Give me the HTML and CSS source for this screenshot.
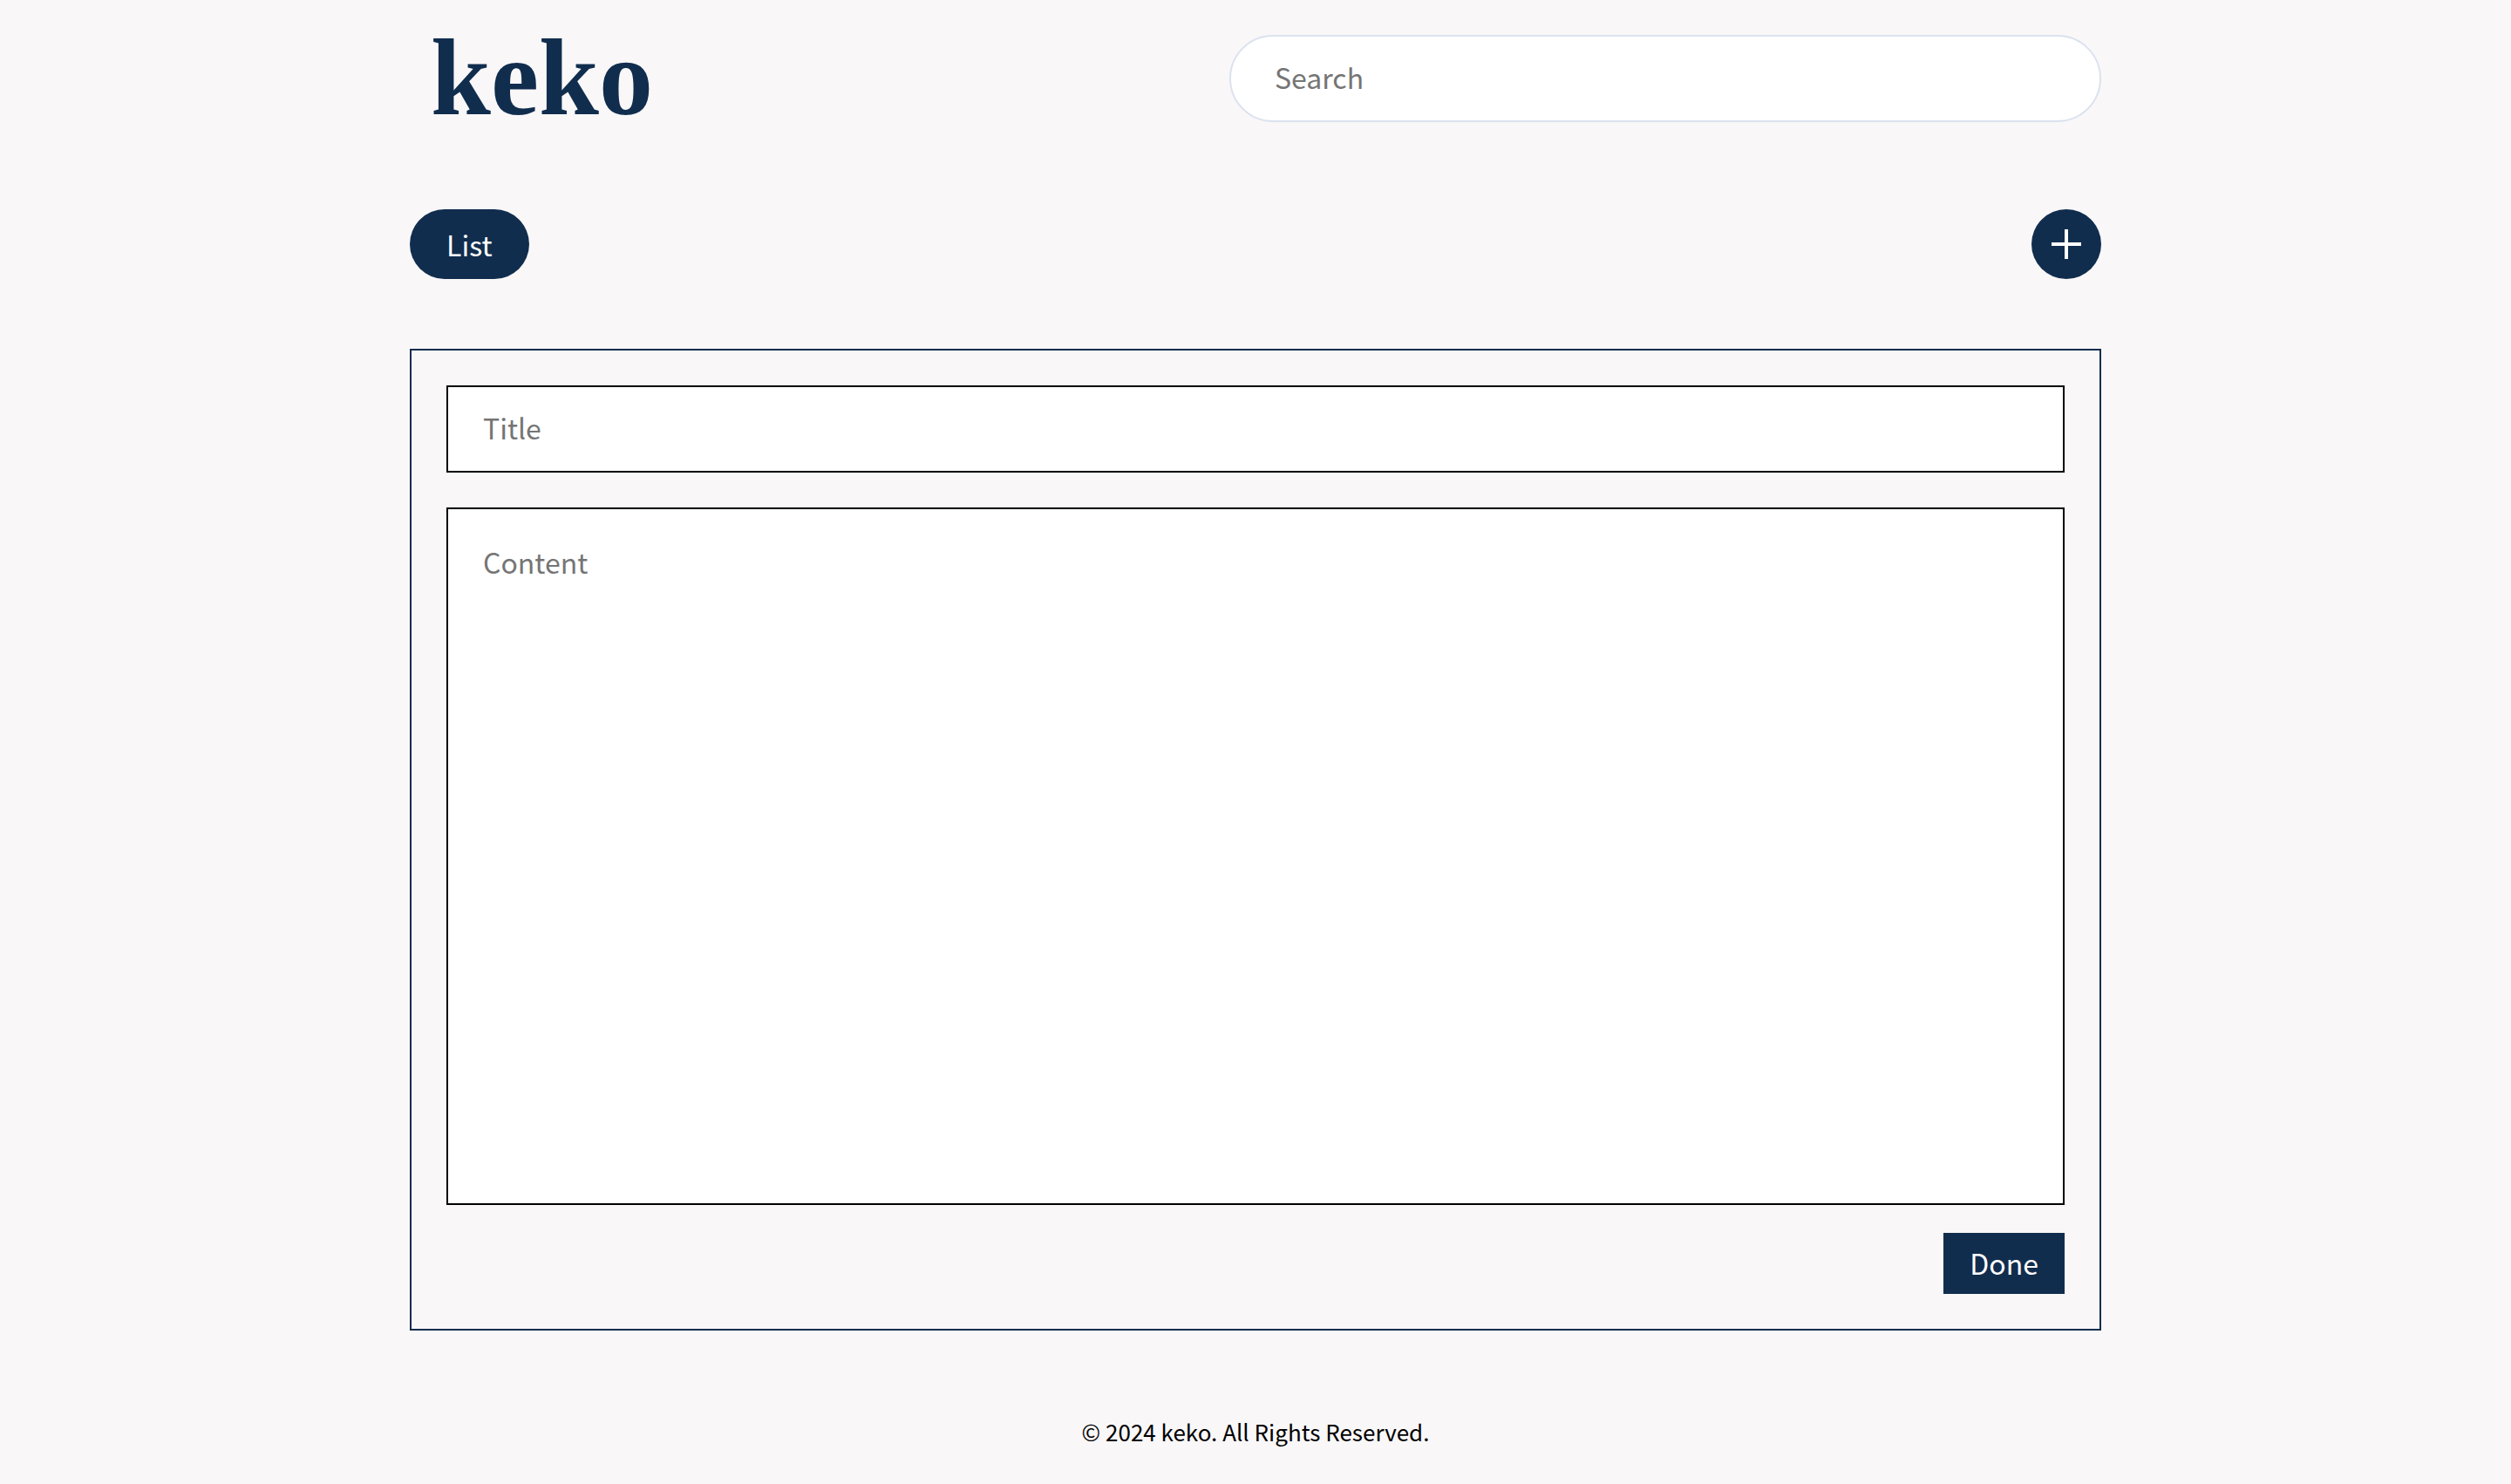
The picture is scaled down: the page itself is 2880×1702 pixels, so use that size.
FILE: index.html
```html
<!DOCTYPE html>
<html lang="en">
<head>
  <meta charset="utf-8">
  <meta name="viewport" content="width=device-width, initial-scale=1">
  <title>keko</title>
  <link rel="stylesheet" href="styles.css">
</head>
<body>
  <div class="page">
    <header class="header">
      <a class="logo" href="#">keko</a>
      <input class="field search" type="search" placeholder="Search" aria-label="Search">
    </header>
    <nav class="toolbar" aria-label="Notes">
      <a class="list-link" href="#">List</a>
      <button class="add-button" type="button" aria-label="Add">
        <svg class="add-icon" viewBox="0 0 34 34" aria-hidden="true">
          <path d="M17 0V34M0 17H34" stroke="currentColor" stroke-width="4"/>
        </svg>
      </button>
    </nav>
    <main>
      <form class="editor">
        <input class="field" type="text" placeholder="Title" aria-label="Title">
        <textarea class="field content" placeholder="Content" aria-label="Content"></textarea>
        <button class="done-button" type="button">Done</button>
      </form>
    </main>
    <footer class="footer">© 2024 keko. All Rights Reserved.</footer>
  </div>
</body>
</html>
```
FILE: styles.css
```css
*,
*::before,
*::after {
  box-sizing: border-box;
}

:root {
  --navy: #112d4e;
  --page: #f9f7f8;
  --outline: #dbe2ef;
}

body {
  margin: 0;
  background: var(--page);
  color: #000;
  font-family: "Noto Sans CJK KR", "Noto Sans", sans-serif;
  font-size: 32px;
  line-height: 48px;
}

input,
textarea,
button {
  margin: 0;
  font: inherit;
}

.page {
  max-width: 2020px;
  margin: 0 auto;
  padding: 40px;
}

.header,
.toolbar {
  display: flex;
  align-items: center;
  justify-content: space-between;
  gap: 40px;
}

.logo {
  padding-left: 24px;
  color: var(--navy);
  font-family: "Liberation Serif", serif;
  font-size: 124px;
  font-weight: 700;
  line-height: 100px;
  text-decoration: none;
}

.field {
  display: block;
  width: 100%;
  padding: 22px 40px 26px;
  border: 2px solid #000;
  border-radius: 0;
  background: #fff;
  appearance: none;
  outline: none;
}

.field::placeholder {
  color: #757575;
  opacity: 1;
}

.search {
  max-width: 1000px;
  padding-right: 50px;
  padding-left: 50px;
  border-color: var(--outline);
  border-radius: 50px;
}

.toolbar {
  margin: 100px 0 80px;
}

.list-link {
  padding: 16px 42px;
  border-radius: 40px;
  background: var(--navy);
  color: #fff;
  text-decoration: none;
}

.add-button {
  display: grid;
  place-items: center;
  width: 80px;
  height: 80px;
  padding: 0;
  border: 0;
  border-radius: 50%;
  background: var(--navy);
  color: #fff;
}

.add-icon {
  width: 34px;
  height: 34px;
}

.editor {
  display: flex;
  flex-direction: column;
  padding: 40px;
  border: 2px solid var(--navy);
}

.content {
  height: 800px;
  margin: 40px 0 32px;
  padding: 36px 40px;
  resize: none;
}

.done-button {
  align-self: flex-end;
  padding: 10px 30px 12px;
  border: 0;
  background: var(--navy);
  color: #fff;
}

.footer {
  margin-top: 96px;
  font-size: 26px;
  line-height: 40px;
  text-align: center;
}
```
